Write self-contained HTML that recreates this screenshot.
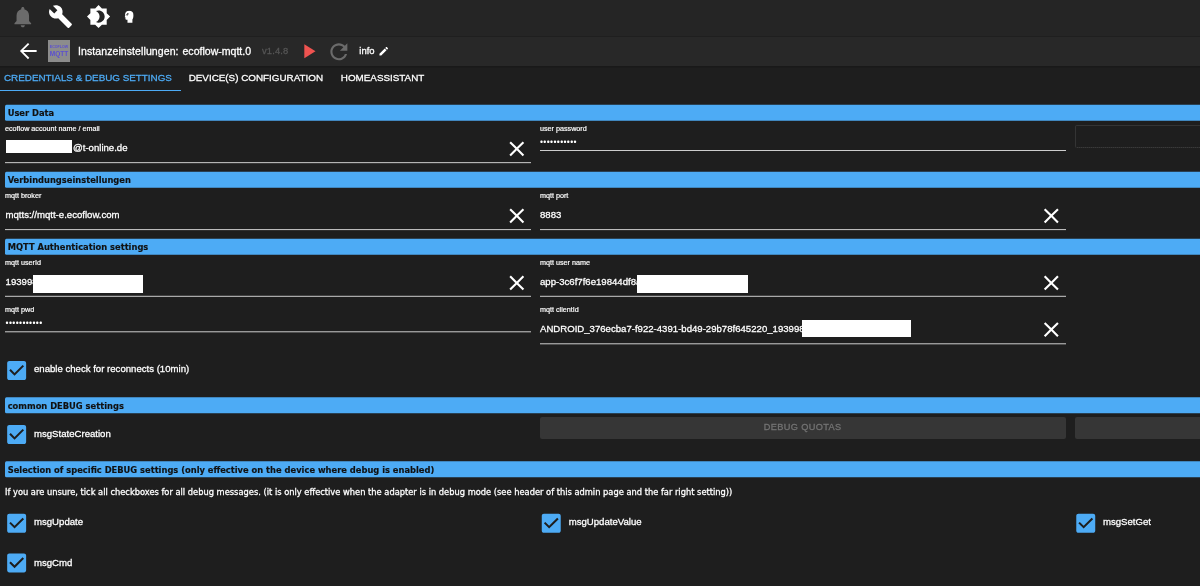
<!DOCTYPE html>
<html lang="de">
<head>
<meta charset="utf-8">
<title>Instanzeinstellungen: ecoflow-mqtt.0</title>
<style>
*{box-sizing:border-box;margin:0;padding:0}
html,body{width:1200px;height:586px;overflow:hidden;background:#1e1e1e}
body{position:relative;font-family:"Liberation Sans",sans-serif;color:#fff;font-size:9.6px}
.a{position:absolute;white-space:pre;line-height:12px}
span.a,.hd span{-webkit-text-stroke:0.28px}
#wrap{position:absolute;left:0;top:0;width:1200px;height:586px;will-change:transform}
#top{left:0;top:0;width:1200px;height:36px;background:#252525}
#sep{left:0;top:36px;width:1200px;height:1px;background:#1f1f1f}
#shd{left:0;top:66px;width:1200px;height:2px;background:linear-gradient(#181818,#1c1c1c)}
#bar{left:0;top:37px;width:1200px;height:29px;background:#282828}
svg{position:absolute;display:block}
.hd{position:absolute;left:5.25px;width:1200px;height:16.1px;background:#4dabf5;border-radius:1.5px 0 0 1.5px}
.hd span{-webkit-text-stroke:0.15px !important;position:absolute;left:2.4px;top:1.9px;white-space:pre;line-height:12px;font-family:"DejaVu Sans Condensed","DejaVu Sans",sans-serif;font-weight:700;font-size:9.25px;color:#111}
span.lb{-webkit-text-stroke:0.18px}
.ul{position:absolute;height:1.2px;background:#cdcdcd}
.wb{position:absolute;background:#fff}
.tab{font-size:9.85px;top:71.5px}
span.pw{letter-spacing:.35px;-webkit-text-stroke:0}
.btn{position:absolute;top:417px;height:21.5px;background:#363636;border-radius:2px}
.tx{font-family:"DejaVu Sans Condensed","DejaVu Sans",sans-serif;font-size:9.23px}
</style>
</head>
<body>
<div id="wrap">
<div class="a" id="top"></div>
<div class="a" id="bar"></div>
<div class="a" id="sep"></div>
<div class="a" id="shd"></div>

<!-- top icons -->
<svg style="left:10px;top:4px;transform:translate(0.30px,0.40px)" width="25" height="25" viewBox="0 0 24 24" fill="#6b6b6b"><path d="M12 22c1.1 0 2-.9 2-2h-4c0 1.1.89 2 2 2zm6-6v-5c0-3.07-1.64-5.64-4.5-6.32V4c0-.83-.67-1.5-1.5-1.5s-1.500.67-1.500 1.500v.68C7.630 5.360 6 7.920 6 11v5l-2 2v1h16v-1l-2-2z"/></svg>
<svg style="left:48px;top:4px" width="25" height="25" viewBox="0 0 24 24" fill="#fff"><path d="M22.700 19l-9.100-9.100c.9-2.300.4-5-1.500-6.900-2-2-5-2.400-7.400-1.300L9 6 6 9 1.600 4.700C.4 7.100.9 10.100 2.900 12.100c1.900 1.900 4.600 2.400 6.900 1.500l9.100 9.100c.4.4 1 .4 1.400 0l2.300-2.300c.5-.4.5-1.100.1-1.400z"/></svg>
<svg style="left:86px;top:4px;transform:translate(0.30px,0.30px)" width="24.500" height="24.500" viewBox="0 0 24 24" fill="#fff"><path d="M20 8.690V4h-4.690L12 .69 8.690 4H4v4.690L.69 12 4 15.310V20h4.690L12 23.310 15.310 20H20v-4.690L23.310 12 20 8.690zM12 18c-.89 0-1.740-.2-2.500-.55C11.560 16.500 13 14.420 13 12s-1.440-4.500-3.500-5.450C10.260 6.200 11.110 6 12 6c3.310 0 6 2.690 6 6s-2.690 6-6 6z"/></svg>
<svg id="head" style="left:124px;top:10px;transform:translate(0.50px,0.50px)" width="9.3" height="12.6" viewBox="0 0 10 13" preserveAspectRatio="none" fill="#fff"><path d="M5 .3C2.400.3.600 2 .6 4.200c0 .5.100.9.200 1.300L0 7h1v1.600c0 .6.400 1 1 1h1.200V12.700h5.300V9.200C9.400 8.300 10 6.800 10 5 10 2.300 7.800.3 5 .3z"/><path d="M1.800 3.600l2.600.9-1.900 1z" fill="#252525"/><circle cx="3.600" cy="3.300" r=".8" fill="#252525"/></svg>

<!-- second bar -->
<svg style="left:15px;top:38px;transform:translate(0.80px,0.50px)" width="25" height="25" viewBox="0 0 24 24" fill="#fff"><path d="M20 11.100H7.300l5.650-5.650L11.700 4.200 4 12l7.700 7.800 1.250-1.250L7.300 12.900H20z"/></svg>
<div class="a" id="logo" style="left:48px;top:40px;width:22px;height:22px;background:#8c8c8c;color:#5b4fd0;font-weight:700;text-align:center"><span class="a" style="left:0;width:22px;top:4.6px;font-size:3.6px;line-height:4px;-webkit-text-stroke:0">ECOFLOW</span><span class="a" style="left:0;width:22px;top:9.8px;font-size:6.5px;line-height:7px;-webkit-text-stroke:0">MQTT</span></div>
<span class="a" id="t1" style="left:78px;top:44.500px;font-size:10.550px;letter-spacing:.07px">Instanzeinstellungen:</span>
<span class="a" id="t2" style="left:182.5px;top:44.500px;font-size:10.550px">ecoflow-mqtt.0</span>
<span class="a" id="ver" style="left:262px;top:45px;font-size:9.400px;letter-spacing:.15px;color:#555">v1.4.8</span>
<svg style="left:296px;top:39px;transform:translate(0.20px,0.05px)" width="24.400" height="24.400" viewBox="0 0 24 24" fill="#ef5350"><path d="M8 5v14l11-7z"/></svg>
<svg style="left:326px;top:39px;transform:translate(0.10px,0.00px)" width="25.500" height="25.500" viewBox="0 0 24 24" fill="#6b6b6b"><path d="M17.650 6.350C16.200 4.900 14.210 4 12 4c-4.420 0-7.990 3.580-7.990 8s3.570 8 7.990 8c3.730 0 6.840-2.550 7.730-6h-2.080c-.82 2.330-3.040 4-5.650 4-3.310 0-6-2.690-6-6s2.690-6 6-6c1.660 0 3.140.69 4.220 1.780L13 11h7V4l-2.350 2.350z"/></svg>
<span class="a" id="info" style="left:359.300px;top:45px;font-size:9.450px">info</span>
<svg style="left:378px;top:45px;transform:translate(0.00px,0.50px)" width="11.500" height="11.500" viewBox="0 0 24 24" fill="#fff"><path d="M3 17.250V21h3.750L17.810 9.940l-3.750-3.750L3 17.250zM20.710 7.040c.39-.39.39-1.020 0-1.410l-2.340-2.340c-.39-.39-1.020-.39-1.410 0l-1.830 1.830 3.750 3.750 1.830-1.830z"/></svg>

<!-- tabs -->
<span class="a tab" id="tab1" style="left:4px;color:#4dabf5">CREDENTIALS &amp; DEBUG SETTINGS</span>
<span class="a tab" id="tab2" style="left:188.700px">DEVICE(S) CONFIGURATION</span>
<span class="a tab" id="tab3" style="left:340.800px">HOMEASSISTANT</span>
<div class="a" style="left:0;top:90px;width:180.500px;height:1.400px;background:#4dabf5"></div>
<!-- User Data -->
<div class="hd" style="top:104px;transform:translateY(0.70px)"><span id="h1">User Data</span></div>
<span class="a lb" id="l1" style="left:5px;top:123.11px;font-size:7.2px">ecoflow account name / email</span>
<span class="a lb" id="l2" style="left:540px;top:123.11px;font-size:7.2px">user password</span>
<div class="wb" style="left:5.6px;top:139.8px;width:66.4px;height:13.1px"></div>
<span class="a " id="v1" style="left:73px;top:141.87px;font-size:9.6px">@t-online.de</span>
<svg style="left:504px;top:136px;transform:translate(0.10px,0.10px)" width="25.4" height="25.4" viewBox="0 0 24 24" fill="#fff"><path d="M19 6.41L17.59 5 12 10.59 6.41 5 5 6.410 10.59 12 5 17.59 6.41 19 12 13.41 17.59 19 19 17.59 13.41 12z"/></svg>
<div class="ul" style="left:5.0px;top:162px;width:526.4px;transform:translateY(0.15px)"></div>
<span class="a pw" id="p1" style="left:540px;top:136.37px;font-size:8.6px">•••••••••••</span>
<div class="ul" style="left:540.0px;top:150px;width:526.0px;transform:translateY(0.00px)"></div>
<div class="a" style="left:1075px;top:125px;width:140px;height:23px;border:1px solid #343434;border-bottom:1px dotted #4a4a4a;border-radius:2px"></div>
<!-- Verbindungseinstellungen -->
<div class="hd" style="top:171px;transform:translateY(0.80px)"><span id="h2">Verbindungseinstellungen</span></div>
<span class="a lb" id="l3" style="left:5px;top:190.11px;font-size:7.2px">mqtt broker</span>
<span class="a lb" id="l4" style="left:540px;top:190.11px;font-size:7.2px">mqtt port</span>
<span class="a " id="v2" style="left:5.5px;top:209.27px;font-size:9.6px">mqtts://mqtt-e.ecoflow.com</span>
<svg style="left:504px;top:203px;transform:translate(0.10px,0.10px)" width="25.4" height="25.4" viewBox="0 0 24 24" fill="#fff"><path d="M19 6.41L17.59 5 12 10.59 6.41 5 5 6.410 10.59 12 5 17.59 6.41 19 12 13.41 17.59 19 19 17.59 13.41 12z"/></svg>
<div class="ul" style="left:5.0px;top:229px;width:526.4px;transform:translateY(0.10px)"></div>
<span class="a " id="v3" style="left:540px;top:209.27px;font-size:9.6px">8883</span>
<svg style="left:1038px;top:203px;transform:translate(0.60px,0.10px)" width="25.4" height="25.4" viewBox="0 0 24 24" fill="#fff"><path d="M19 6.41L17.59 5 12 10.59 6.41 5 5 6.410 10.59 12 5 17.59 6.41 19 12 13.41 17.59 19 19 17.59 13.41 12z"/></svg>
<div class="ul" style="left:540.0px;top:229px;width:526.0px;transform:translateY(0.10px)"></div>
<!-- MQTT Authentication settings -->
<div class="hd" style="top:238px;transform:translateY(0.80px)"><span id="h3">MQTT Authentication settings</span></div>
<span class="a lb" id="l5" style="left:5px;top:257.01px;font-size:7.2px">mqtt userId</span>
<span class="a lb" id="l6" style="left:540px;top:257.01px;font-size:7.2px">mqtt user name</span>
<span class="a " id="v4" style="left:5.6px;top:276.17px;font-size:9.6px">193998</span>
<div class="wb" style="left:33px;top:275.1px;width:110px;height:17.6px"></div>
<svg style="left:504px;top:270px;transform:translate(0.10px,0.20px)" width="25.4" height="25.4" viewBox="0 0 24 24" fill="#fff"><path d="M19 6.41L17.59 5 12 10.59 6.41 5 5 6.410 10.59 12 5 17.59 6.41 19 12 13.41 17.59 19 19 17.59 13.41 12z"/></svg>
<div class="ul" style="left:5.0px;top:295px;width:526.4px;transform:translateY(0.80px)"></div>
<span class="a " id="v5" style="left:540px;top:276.17px;font-size:9.6px">app-3c6f7f6e19844df8a</span>
<div class="wb" style="left:637px;top:275.1px;width:111px;height:17.6px"></div>
<svg style="left:1038px;top:270px;transform:translate(0.60px,0.20px)" width="25.4" height="25.4" viewBox="0 0 24 24" fill="#fff"><path d="M19 6.41L17.59 5 12 10.59 6.41 5 5 6.410 10.59 12 5 17.59 6.41 19 12 13.41 17.59 19 19 17.59 13.41 12z"/></svg>
<div class="ul" style="left:540.0px;top:295px;width:526.0px;transform:translateY(0.80px)"></div>
<span class="a lb" id="l7" style="left:5px;top:304.11px;font-size:7.2px">mqtt pwd</span>
<span class="a lb" id="l8" style="left:540px;top:304.11px;font-size:7.2px">mqtt clientId</span>
<span class="a pw" id="p2" style="left:5.6px;top:317.47px;font-size:8.6px">•••••••••••</span>
<div class="ul" style="left:5.0px;top:331px;width:526.4px;transform:translateY(0.30px)"></div>
<span class="a " id="v6" style="left:540px;top:323.17px;font-size:9.6px">ANDROID_376ecba7-f922-4391-bd49-29b78f645220_193998</span>
<div class="wb" style="left:801.5px;top:319.5px;width:109.5px;height:17.6px"></div>
<svg style="left:1038px;top:316px;transform:translate(0.60px,0.90px)" width="25.4" height="25.4" viewBox="0 0 24 24" fill="#fff"><path d="M19 6.41L17.59 5 12 10.59 6.41 5 5 6.410 10.59 12 5 17.59 6.41 19 12 13.41 17.59 19 19 17.59 13.41 12z"/></svg>
<div class="ul" style="left:540.0px;top:343px;width:526.0px;transform:translateY(0.30px)"></div>
<svg style="left:4px;top:357px;transform:translate(0.00px,0.90px)" width="25.3" height="25.3" viewBox="0 0 24 24" fill="#4dabf5"><path d="M19 3H5c-1.11 0-2 .9-2 2v14c0 1.1.89 2 2 2h14c1.11 0 2-.9 2-2V5c0-1.1-.89-2-2-2zm-9 14l-5-5 1.380-1.380L10 14.240l7.620-7.620L19 8l-9 9z"/></svg>
<span class="a " id="c1" style="left:34px;top:362.9px;font-size:9.6px">enable check for reconnects (10min)</span>
<!-- common DEBUG settings -->
<div class="hd" style="top:397px;transform:translateY(0.30px)"><span id="h4" style="top:2.6px">common DEBUG settings</span></div>
<svg style="left:4px;top:421px;transform:translate(0.00px,0.90px)" width="25.3" height="25.3" viewBox="0 0 24 24" fill="#4dabf5"><path d="M19 3H5c-1.11 0-2 .9-2 2v14c0 1.1.89 2 2 2h14c1.11 0 2-.9 2-2V5c0-1.1-.89-2-2-2zm-9 14l-5-5 1.380-1.380L10 14.240l7.620-7.620L19 8l-9 9z"/></svg>
<span class="a " id="c2" style="left:34px;top:428.47px;font-size:9.6px">msgStateCreation</span>
<div class="btn" style="left:540px;width:526px"></div>
<div class="btn" style="left:1074.8px;width:140px"></div>
<span class="a " id="dq" style="left:763.7px;top:421.11px;font-size:9.2px;color:#737373;letter-spacing:0.37px">DEBUG QUOTAS</span>
<!-- Selection of specific DEBUG settings -->
<div class="hd" style="top:461px;transform:translateY(0.30px)"><span id="h5" style="top:2.6px">Selection of specific DEBUG settings (only effective on the device where debug is enabled)</span></div>
<span class="a tx" id="tx" style="left:5px;top:485.91px;font-size:9.23px">If you are unsure, tick all checkboxes for all debug messages. (it is only effective when the adapter is in debug mode (see header of this admin page and the far right setting))</span>
<svg style="left:4px;top:510px;transform:translate(0.00px,0.70px)" width="25.3" height="25.3" viewBox="0 0 24 24" fill="#4dabf5"><path d="M19 3H5c-1.11 0-2 .9-2 2v14c0 1.1.89 2 2 2h14c1.11 0 2-.9 2-2V5c0-1.1-.89-2-2-2zm-9 14l-5-5 1.380-1.380L10 14.240l7.620-7.620L19 8l-9 9z"/></svg>
<span class="a " id="c3" style="left:34px;top:515.77px;font-size:9.6px">msgUpdate</span>
<svg style="left:538px;top:510px;transform:translate(0.60px,0.70px)" width="25.3" height="25.3" viewBox="0 0 24 24" fill="#4dabf5"><path d="M19 3H5c-1.11 0-2 .9-2 2v14c0 1.1.89 2 2 2h14c1.11 0 2-.9 2-2V5c0-1.1-.89-2-2-2zm-9 14l-5-5 1.380-1.380L10 14.240l7.620-7.620L19 8l-9 9z"/></svg>
<span class="a " id="c4" style="left:568.7px;top:515.77px;font-size:9.6px">msgUpdateValue</span>
<svg style="left:1073px;top:510px;transform:translate(0.10px,0.70px)" width="25.3" height="25.3" viewBox="0 0 24 24" fill="#4dabf5"><path d="M19 3H5c-1.11 0-2 .9-2 2v14c0 1.1.89 2 2 2h14c1.11 0 2-.9 2-2V5c0-1.1-.89-2-2-2zm-9 14l-5-5 1.380-1.380L10 14.240l7.620-7.620L19 8l-9 9z"/></svg>
<span class="a " id="c5" style="left:1103px;top:515.77px;font-size:9.6px">msgSetGet</span>
<svg style="left:4px;top:550px;transform:translate(0.00px,0.30px)" width="25.3" height="25.3" viewBox="0 0 24 24" fill="#4dabf5"><path d="M19 3H5c-1.11 0-2 .9-2 2v14c0 1.1.89 2 2 2h14c1.11 0 2-.9 2-2V5c0-1.1-.89-2-2-2zm-9 14l-5-5 1.380-1.380L10 14.240l7.620-7.620L19 8l-9 9z"/></svg>
<span class="a " id="c6" style="left:34px;top:556.67px;font-size:9.6px">msgCmd</span>
</div>
</body>
</html>
